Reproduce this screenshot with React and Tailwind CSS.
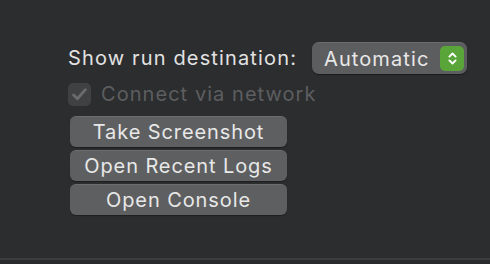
import { ChevronsUpDown } from "lucide-react"

const Btn = ({ children }) => (
  <button className="w-[217px] h-[31px] rounded-[6px] bg-[#5e5f61] border-t border-[#6c6d6f] text-[#e8e8e8] text-[20px] tracking-[0.9px] leading-none shadow-[0_1px_1px_rgba(0,0,0,0.35)]">
    {children}
  </button>
)

export default function App() {
  return (
    <div className="w-[490px] h-[264px] bg-[#2c2d2f] flex flex-col font-['Inter',sans-serif] overflow-hidden">
      <div className="flex-1 pl-[68px] pt-[42px]">
        <div className="flex items-center h-[32px]">
          <span className="text-[20px] text-[#e2e2e2] tracking-[1.15px]">Show run destination:</span>
          <div className="ml-auto mr-[23px] w-[155px] h-[32px] rounded-[7px] bg-[#5c5d5f] border-t border-[#6a6b6d] shadow-[0_1px_1px_rgba(0,0,0,0.4)] flex items-center pl-[12px] pr-[3px]">
            <span className="flex-1 text-[20px] tracking-[1.1px] text-[#e8e8e8]">Automatic</span>
            <div className="w-[24px] h-[25px] rounded-[5px] bg-[#5aa53a] flex items-center justify-center">
              <ChevronsUpDown className="w-[15px] h-[15px] text-white" strokeWidth={3} />
            </div>
          </div>
        </div>
        <div className="flex items-center mt-[9px] h-[22px]">
          <div className="w-[23px] h-[23px] rounded-[5px] bg-[#404143] flex items-center justify-center">
            <svg width="15" height="13" viewBox="0 0 14 12">
              <path d="M1.5 6.5 L5 10 L12.5 1.5" fill="none" stroke="#6a6b6d" strokeWidth="2.6" strokeLinecap="round" strokeLinejoin="round" />
            </svg>
          </div>
          <span className="ml-[10px] text-[20px] tracking-[1.05px] text-[#5d5e60]">Connect via network</span>
        </div>
        <div className="flex flex-col gap-[3px] mt-[11px] ml-[2px]">
          <Btn>Take Screenshot</Btn>
          <Btn>Open Recent Logs</Btn>
          <Btn>Open Console</Btn>
        </div>
      </div>
      <div className="h-[2px] bg-[#3c3d3f]" />
      <div className="h-[4px] bg-[#2a2b2d]" />
    </div>
  )
}
